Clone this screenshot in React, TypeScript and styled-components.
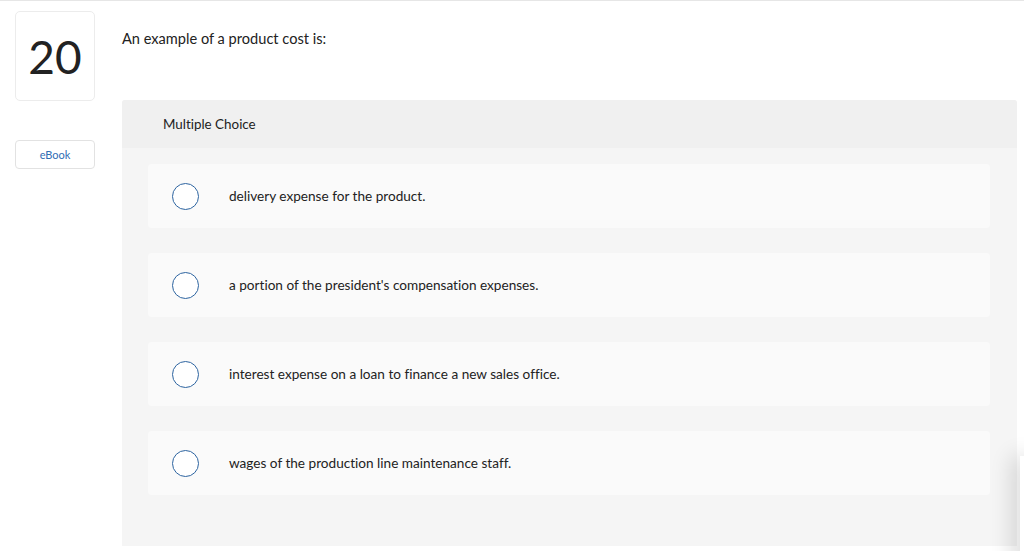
import styled, { createGlobalStyle } from "styled-components";

const GlobalStyle = createGlobalStyle`
  html, body {
    margin: 0;
    padding: 0;
    background: #ffffff;
    font-family: Lato, "Open Sans", Arial, sans-serif;
    font-variant-ligatures: none;
    color: #222222;
    overflow: hidden;
  }
`;

const Page = styled.div`
  position: relative;
  width: 1024px;
  height: 551px;
  box-sizing: border-box;
  border-top: 1px solid #e6e6e6;
  display: flex;
  padding: 10px 7px 0 15px;
  gap: 27px;
  overflow: hidden;
`;

const Sidebar = styled.div`
  display: flex;
  flex-direction: column;
  gap: 39px;
  width: 80px;
  flex-shrink: 0;
`;

const NumberBox = styled.div`
  height: 90px;
  box-sizing: border-box;
  border: 1px solid #ececec;
  border-radius: 5px;
  display: flex;
  align-items: center;
  justify-content: center;
  font-size: 46px;
  color: #222222;
`;

const EBookButton = styled.button`
  height: 29px;
  box-sizing: border-box;
  border: 1px solid #e2e2e2;
  border-radius: 4px;
  background: #ffffff;
  color: #2f6db5;
  font-family: inherit;
  font-size: 11px;
  padding: 0;
  margin: 0;
`;

const Main = styled.div`
  flex: 1;
  display: flex;
  flex-direction: column;
`;

const Question = styled.div`
  height: 89px;
  box-sizing: border-box;
  padding-top: 19px;
  font-size: 14.6px;
  color: #222222;
`;

const Panel = styled.div`
  background: #f5f5f5;
  border-radius: 3px 3px 0 0;
  height: 446px;
  display: flex;
  flex-direction: column;
`;

const PanelHeader = styled.div`
  height: 48px;
  background: #f0f0f0;
  border-radius: 3px 3px 0 0;
  display: flex;
  align-items: center;
  padding-left: 41px;
  font-size: 13.4px;
  color: #222222;
`;

const Options = styled.div`
  display: flex;
  flex-direction: column;
  gap: 25px;
  padding: 16px 27px 0 26px;
`;

const Option = styled.label`
  height: 64px;
  background: #fafafa;
  border-radius: 4px;
  display: flex;
  align-items: center;
  padding-left: 24px;
  gap: 30px;
  font-size: 13.6px;
  color: #222222;
`;

const Radio = styled.span`
  width: 27px;
  height: 27px;
  box-sizing: border-box;
  border: 1.5px solid #2d64a0;
  border-radius: 50%;
  background: #ffffff;
  flex-shrink: 0;
`;

const EdgeShadow = styled.div`
  position: absolute;
  right: -18px;
  top: 455px;
  width: 22px;
  height: 120px;
  background: #ffffff;
  box-shadow: -8px 0 22px rgba(0, 0, 0, 0.14);
`;

const choices = [
  "delivery expense for the product.",
  "a portion of the president's compensation expenses.",
  "interest expense on a loan to finance a new sales office.",
  "wages of the production line maintenance staff.",
];

export default function App() {
  return (
    <>
      <GlobalStyle />
      <Page>
        <Sidebar>
          <NumberBox>20</NumberBox>
          <EBookButton>eBook</EBookButton>
        </Sidebar>
        <Main>
          <Question>An example of a product cost is:</Question>
          <Panel>
            <PanelHeader>Multiple Choice</PanelHeader>
            <Options>
              {choices.map((choice) => (
                <Option key={choice}>
                  <Radio />
                  {choice}
                </Option>
              ))}
            </Options>
          </Panel>
        </Main>
        <EdgeShadow />
      </Page>
    </>
  );
}
